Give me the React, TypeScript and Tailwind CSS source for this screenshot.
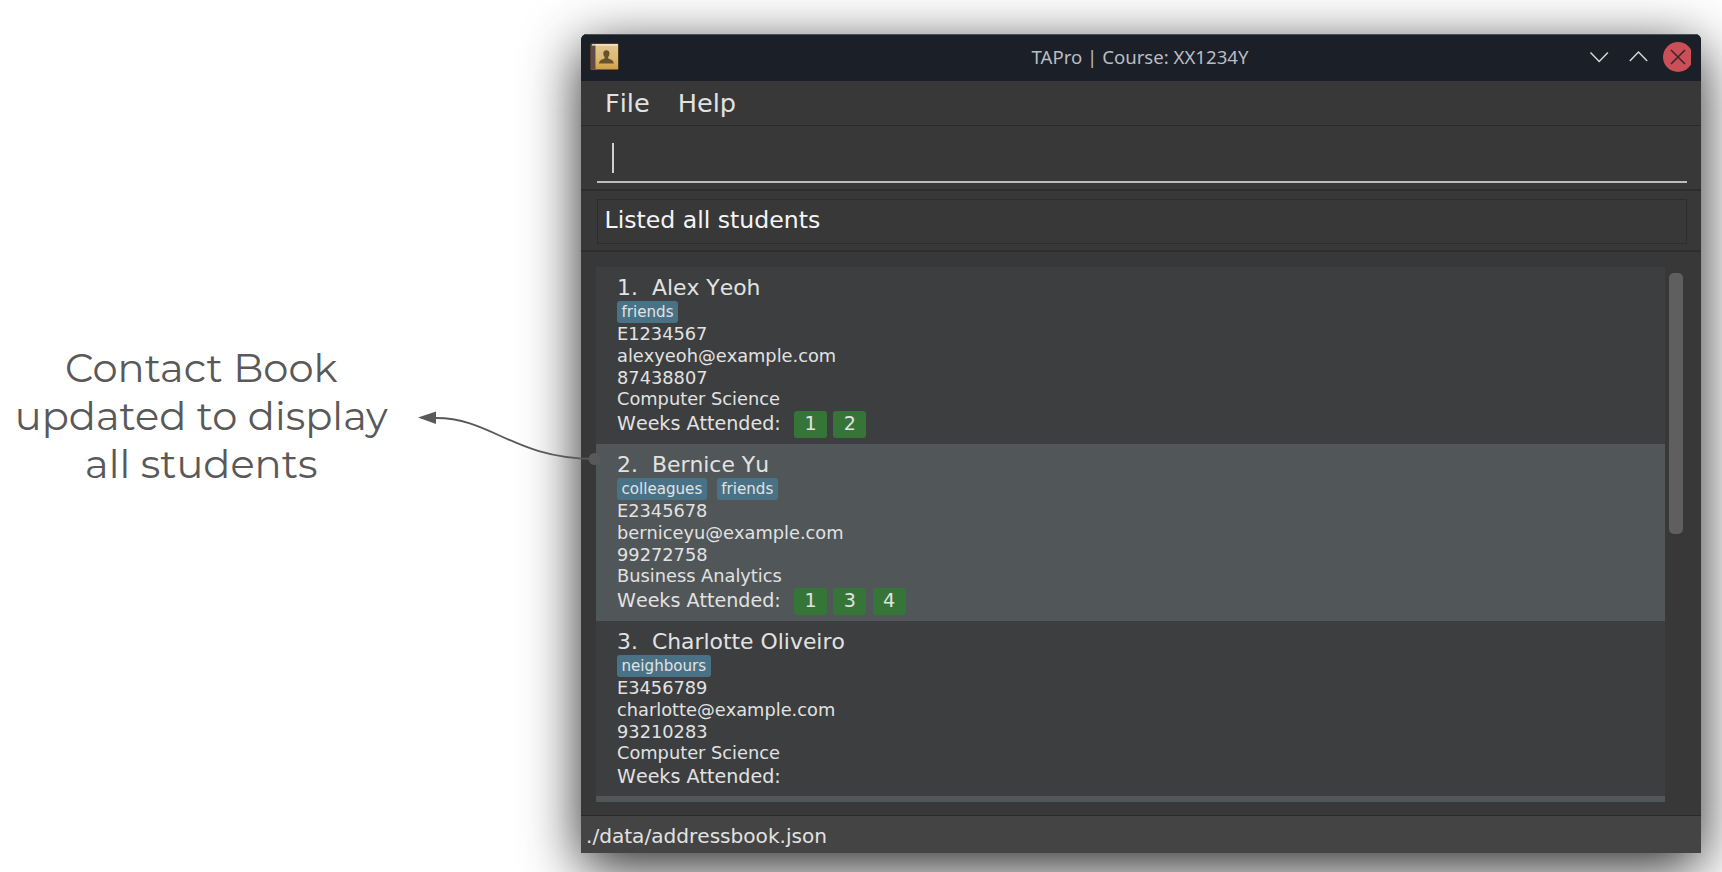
type Student = {
  name: string;
  tags: string[];
  id: string;
  email: string;
  phone: string;
  major: string;
  weeks: number[];
};

const students: Student[] = [
  { name: 'Alex Yeoh', tags: ['friends'], id: 'E1234567', email: 'alexyeoh@example.com', phone: '87438807', major: 'Computer Science', weeks: [1, 2] },
  { name: 'Bernice Yu', tags: ['colleagues', 'friends'], id: 'E2345678', email: 'berniceyu@example.com', phone: '99272758', major: 'Business Analytics', weeks: [1, 3, 4] },
  { name: 'Charlotte Oliveiro', tags: ['neighbours'], id: 'E3456789', email: 'charlotte@example.com', phone: '93210283', major: 'Computer Science', weeks: [] },
];

function BookIcon() {
  return (
    <svg width="30" height="28" viewBox="0 0 30 28" className="block">
      <defs>
        <linearGradient id="cover" x1="0" y1="0" x2="0" y2="1">
          <stop offset="0" stopColor="#e2c795" />
          <stop offset="0.6" stopColor="#dcb86f" />
          <stop offset="1" stopColor="#cf9f48" />
        </linearGradient>
      </defs>
      <rect x="0.5" y="0.5" width="28" height="26.5" rx="1.2" fill="#7d5a2c" />
      <rect x="1" y="1" width="4.5" height="25" fill="#5d4c4a" />
      <rect x="5.5" y="1" width="22.5" height="25" fill="url(#cover)" />
      <rect x="2" y="1.2" width="25.5" height="1.4" fill="#f3e6cf" />
      <path d="M16.4 7.2c-2.2 0-3.2 1.5-3.1 3.4.1 1.7.6 2.7 1.3 3.3v1.6c-2.2 1-5.2 1.5-5.6 4.9h14.8c-.4-3.4-3.4-3.9-5.6-4.9v-1.6c.7-.6 1.2-1.6 1.3-3.3.1-1.9-.9-3.4-3.1-3.4z" fill="#66522f" />
    </svg>
  );
}

function StudentRow({ student, index }: { student: Student; index: number }) {
  return (
    <div
      className={`shrink-0 pl-[21px] pt-[8px] ${index % 2 ? 'bg-[#515658]' : 'bg-[#3c3e3f]'} ${student.weeks.length ? 'h-[177px]' : 'h-[175px]'}`}
    >
      <div className="flex h-[26px] items-center gap-[14px] text-[21.9px]">
        <span>{index + 1}.</span>
        <span>{student.name}</span>
      </div>
      <div className="flex h-[22px] gap-[10px]">
        {student.tags.map((tag) => (
          <span key={tag} className="flex h-[22px] items-center rounded-[3px] bg-[#4a7287] px-[4.5px] pt-[1.5px] text-[15.1px] leading-none">
            {tag}
          </span>
        ))}
      </div>
      <div className="text-[17.8px] leading-[21.8px]">
        <div>{student.id}</div>
        <div>{student.email}</div>
        <div>{student.phone}</div>
        <div>{student.major}</div>
      </div>
      <div className={`flex items-center text-[19.1px] ${student.weeks.length ? 'h-[28px]' : 'h-[26px]'}`}>
        <span className="w-[177px]">Weeks Attended:</span>
        <div className="flex gap-[6.3px]">
          {student.weeks.map((week) => (
            <span key={week} className="flex h-[27px] w-[33px] items-center justify-center rounded-[3px] bg-[#357638]">
              {week}
            </span>
          ))}
        </div>
      </div>
    </div>
  );
}

export default function App() {
  return (
    <div className="relative flex h-[872px] w-[1722px] overflow-hidden bg-white font-['DejaVu_Sans',sans-serif] whitespace-nowrap [font-kerning:none]">
      <div className="flex w-[581px] shrink-0 items-center pb-[40px]">
        <div className="w-[402.5px] text-center font-['Montserrat','Inter',sans-serif] text-[40px] leading-[48px] font-normal text-[#595959] [font-kerning:normal]">
          <div>Contact Book</div>
          <div>updated to display</div>
          <div>all students</div>
        </div>
      </div>

      <div className="mt-[34px] flex h-[819px] w-[1120px] shrink-0 flex-col overflow-hidden rounded-t-[6px] bg-[#383838] text-[#e2e2e2] shadow-[0_14px_56px_rgba(0,0,0,0.85)]">
        <div className="flex h-[47px] shrink-0 items-center border-t border-[#4a5254] bg-[#1b1f27] pr-[10px] pb-[2px] pl-[9px]">
          <BookIcon />
          <div className="flex-1 pl-[71px] text-center font-['Noto_Sans',sans-serif] text-[18.6px] text-[#b9bcc3] [font-kerning:normal]">
            TAPro | Course: XX1234Y
          </div>
          <svg width="102" height="32" viewBox="-2 0 102 32" fill="none">
            <path d="M-.5 11.5l8.7 9 8.7-9M38.8 20l8.7-9 8.7 9" stroke="#d3d6da" strokeWidth="1.5" />
            <circle cx="87" cy="16" r="15" fill="#cb4f57" />
            <path d="M80 9l14 14M94 9L80 23" stroke="#3a2630" strokeWidth="1.6" />
          </svg>
        </div>
        <div className="flex h-[45px] shrink-0 items-center gap-[28px] border-b border-[#2b2b2b] pt-[1px] pl-[24px] text-[25.6px]">
          <span>File</span>
          <span>Help</span>
        </div>
        <div className="flex h-[63px] shrink-0 flex-col pt-[17px] pr-[14px] pl-[16px]">
          <div className="h-[40px] border-b-2 border-[#bdbdbd] pl-[15px]">
            <div className="h-[30px] w-[2px] bg-[#d0d0d0]" />
          </div>
        </div>
        <div className="flex h-[63px] shrink-0 items-center border-y-2 border-[#2d2d2d] pt-[1px] pr-[14.5px] pl-[15.5px]">
          <div className="flex h-[45px] w-full items-center border border-[#2d2d2d] pl-[7px] text-[23.6px] text-[#f4f4f4]">Listed all students</div>
        </div>
        <div className="flex h-[563px] shrink-0 gap-[4px] pt-[15px] pl-[15px]">
          <div className="flex h-[535px] w-[1069px] flex-col overflow-hidden">
            {students.map((student, i) => (
              <StudentRow key={student.id} student={student} index={i} />
            ))}
            <div className="h-[7px] bg-[#515658]" />
          </div>
          <div className="mt-[5.5px] h-[261px] w-[14px] rounded-[5px] bg-[#5f5f5f]" />
        </div>
        <div className="flex h-[38px] shrink-0 items-center border-t border-[#2a2a2a] bg-[#444] pt-[3px] pl-[5px] text-[20.1px]">./data/addressbook.json</div>
      </div>

      <svg className="absolute top-[390px] left-[400px]" width="210" height="90" viewBox="0 0 210 90" fill="none">
        <path d="M36 28C92 28 112 68 194 69" stroke="#595959" strokeWidth="1.8" />
        <path d="M18 27.5L36 21.5V34z" fill="#595959" />
        <circle cx="194.5" cy="69" r="6" fill="#595959" />
      </svg>
    </div>
  );
}
